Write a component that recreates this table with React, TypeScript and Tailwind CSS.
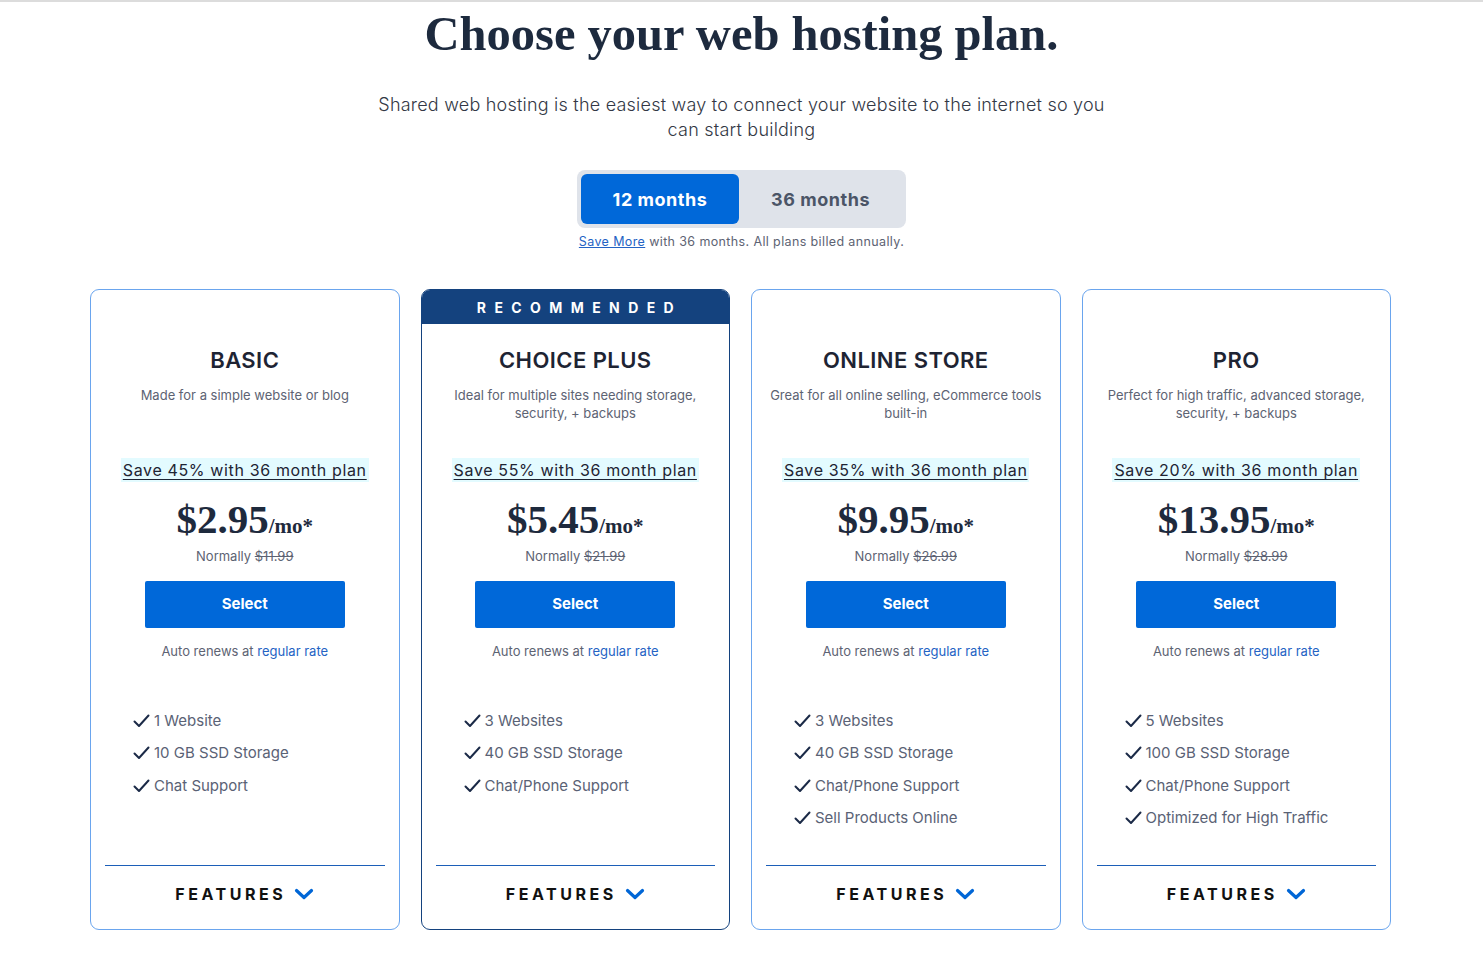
import React, { useState } from "react";

// --- Data ---

interface Plan {
  name: string;
  blurb: string;
  save: string;
  price: string;
  normally: string;
  features: string[];
  recommended?: boolean;
}

const plans: Plan[] = [
  {
    name: "BASIC",
    blurb: "Made for a simple website or blog",
    save: "Save 45% with 36 month plan",
    price: "$2.95",
    normally: "$11.99",
    features: ["1 Website", "10 GB SSD Storage", "Chat Support"],
  },
  {
    name: "CHOICE PLUS",
    blurb: "Ideal for multiple sites needing storage, security, + backups",
    save: "Save 55% with 36 month plan",
    price: "$5.45",
    normally: "$21.99",
    features: ["3 Websites", "40 GB SSD Storage", "Chat/Phone Support"],
    recommended: true,
  },
  {
    name: "ONLINE STORE",
    blurb: "Great for all online selling, eCommerce tools built-in",
    save: "Save 35% with 36 month plan",
    price: "$9.95",
    normally: "$26.99",
    features: [
      "3 Websites",
      "40 GB SSD Storage",
      "Chat/Phone Support",
      "Sell Products Online",
    ],
  },
  {
    name: "PRO",
    blurb: "Perfect for high traffic, advanced storage, security, + backups",
    save: "Save 20% with 36 month plan",
    price: "$13.95",
    normally: "$28.99",
    features: [
      "5 Websites",
      "100 GB SSD Storage",
      "Chat/Phone Support",
      "Optimized for High Traffic",
    ],
  },
];

// --- Icons ---

const Check = () => (
  <svg width="17" height="14" viewBox="0 0 17 14" fill="none" className="shrink-0">
    <path d="M1.5 7.5 L6 12 L15.5 1.5" stroke="#1b2a47" strokeWidth="2" strokeLinecap="round" strokeLinejoin="round" />
  </svg>
);

const Chevron = () => (
  <svg width="20" height="12" viewBox="0 0 20 12" fill="none">
    <path d="M2.5 2.5 L10 9.5 L17.5 2.5" stroke="#0066d6" strokeWidth="3.2" strokeLinecap="round" strokeLinejoin="round" />
  </svg>
);

// --- Card ---

function PlanCard({ plan }: { plan: Plan }) {
  return (
    <div
      className={`flex flex-col rounded-[9px] border bg-white overflow-hidden ${
        plan.recommended ? "border-[#14427e]" : "border-[#6aa5ee]"
      }`}
    >
      {/* Ribbon */}
      <div
        className={`h-[34px] flex items-center justify-center ${
          plan.recommended ? "bg-[#14427e]" : ""
        }`}
      >
        {plan.recommended && (
          <span className="text-white text-[14px] font-bold tracking-[0.6em] pl-[0.6em]">
            RECOMMENDED
          </span>
        )}
      </div>

      <div className="flex flex-col items-center text-center">
        <h2 className="mt-[22px] text-[22px] leading-[28px] font-semibold tracking-[0.02em] text-[#1e2433]">
          {plan.name}
        </h2>
        <p className="mt-[12px] h-[36px] px-[12px] text-[13px] leading-[18px] text-[#5d6373]">
          {plan.blurb}
        </p>
        <span className="mt-[36px] bg-[#e3fbff] px-[2px] text-[16px] leading-[24px] tracking-[0.04em] text-[#1e2433] underline underline-offset-[3px]">
          {plan.save}
        </span>
        <div className="mt-[14px] flex items-baseline text-[#1e2a3d] font-bold" style={{ fontFamily: '"Liberation Serif", serif' }}>
          <span className="text-[41px] leading-[46px]">{plan.price}</span>
          <span className="text-[21px]">/mo*</span>
        </div>
        <p className="mt-[4px] text-[13px] leading-[18px] text-[#5d6373]">
          Normally <span className="line-through">{plan.normally}</span>
        </p>
        <button className="mt-[16px] w-[200px] h-[47px] bg-[#0068d9] rounded-[2px] text-white text-[15px] font-bold">
          Select
        </button>
        <p className="mt-[14px] text-[13px] leading-[18px] text-[#5d6373]">
          Auto renews at <span className="text-[#2463c4]">regular rate</span>
        </p>
      </div>

      <ul className="mt-[50px] h-[155px] pl-[42px] flex flex-col gap-[10.5px]">
        {plan.features.map((f) => (
          <li key={f} className="flex items-center gap-[4px] text-[15px] leading-[22px] text-[#5a6275]">
            <Check />
            {f}
          </li>
        ))}
      </ul>

      <div className="mx-[14px] h-px bg-[#1c5fb8]" />
      <button className="pt-[18px] pb-[25px] flex items-center justify-center gap-[8px]">
        <span className="text-[16px] leading-[20px] font-bold tracking-[0.22em] text-[#111]">
          FEATURES
        </span>
        <Chevron />
      </button>
    </div>
  );
}

// --- Page ---

export default function App() {
  const [term, setTerm] = useState<12 | 36>(12);

  return (
    <div className="min-h-[953px] bg-white border-t-2 border-[#dcdcdc]" style={{ fontFamily: "Inter, sans-serif" }}>
      <h1
        className="text-center text-[48.5px] leading-[64px] font-bold text-[#1d2a3e]"
        style={{ fontFamily: '"Liberation Serif", serif' }}
      >
        Choose your web hosting plan.
      </h1>

      <p className="mt-[26px] text-center text-[18px] leading-[25px] tracking-[0.012em] text-[#333845] font-light">
        Shared web hosting is the easiest way to connect your website to the internet so you
        <br />
        can start building
      </p>

      <div className="mt-[28px] flex justify-center">
        <div className="flex w-[329px] h-[58px] p-[4px] rounded-[8px] bg-[#dfe3ea]">
          <button
            onClick={() => setTerm(12)}
            className={`w-[158px] rounded-[6px] text-[18px] font-bold tracking-[0.03em] ${
              term === 12 ? "bg-[#0068d9] text-white" : "text-[#4b5567]"
            }`}
          >
            12 months
          </button>
          <button
            onClick={() => setTerm(36)}
            className={`flex-1 rounded-[6px] text-[18px] font-bold tracking-[0.03em] ${
              term === 36 ? "bg-[#0068d9] text-white" : "text-[#4b5567]"
            }`}
          >
            36 months
          </button>
        </div>
      </div>

      <p className="mt-[6px] text-center text-[12.5px] leading-[16px] tracking-[0.03em] text-[#5d6373]">
        <a className="text-[#2463c4] underline">Save More</a> with 36 months. All plans billed annually.
      </p>

      <div className="mt-[39px] ml-[90px] w-[1301px] grid grid-cols-4 gap-[21px]">
        {plans.map((p) => (
          <PlanCard key={p.name} plan={p} />
        ))}
      </div>
    </div>
  );
}
